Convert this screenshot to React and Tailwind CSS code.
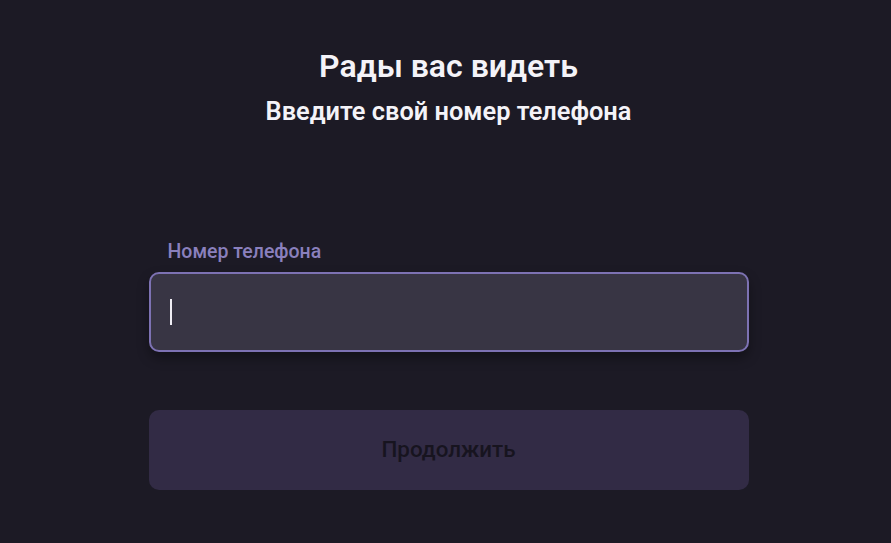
import React from 'react';

export default function App() {
  return (
    <div className="min-h-screen w-full bg-[#1c1a25] flex justify-center pl-[6px]" style={{ fontFamily: 'Roboto, "Noto Sans", sans-serif' }}>
      <div className="w-[600px] flex flex-col items-stretch">
        <h1 className="mt-[46px] text-center text-[32px] leading-[40px] font-semibold text-[#f4f3f8]">Рады вас видеть</h1>
        <p className="mt-[9px] text-center text-[25.4px] leading-[32px] font-semibold text-[#f4f3f8]">Введите свой номер телефона</p>

        <label className="mt-[113px] ml-[19px] text-[19.5px] leading-[24px] font-medium text-[#8a80bd]">Номер телефона</label>
        <div className="mt-[8px] h-[80px] rounded-[10px] border-2 border-[#7d72b3] bg-[#383544] shadow-[0_6px_12px_rgba(0,0,0,0.35)] flex items-center px-[19px]">
          <span className="block w-[2px] h-[26px] bg-[#f0eef5]"></span>
        </div>

        <button className="mt-[58px] h-[80px] rounded-[10px] bg-[#322b45] text-[22.4px] text-[#17141f] font-medium">Продолжить</button>
      </div>
    </div>
  );
}
